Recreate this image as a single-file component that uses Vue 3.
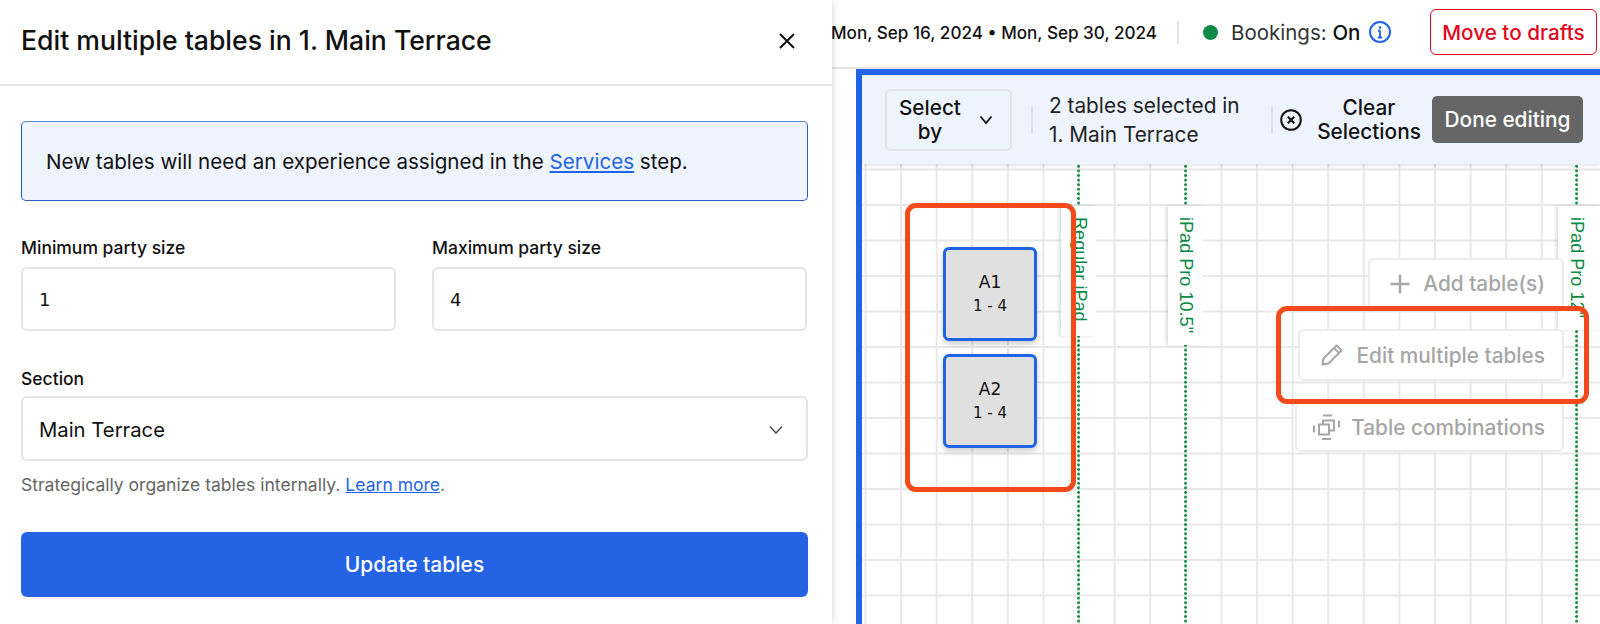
<script setup>
const tables = [
  { id: 'A1', range: '1 - 4', top: 83 },
  { id: 'A2', range: '1 - 4', top: 190 },
]
const guides = [
  { name: 'Regular iPad', left: 215, boxLeft: 199, boxWidth: 35, boxHeight: 130, textLeft: 208 },
  { name: 'iPad Pro 10.5"', left: 322, boxLeft: 306, boxWidth: 35, boxHeight: 139, textLeft: 314 },
  { name: 'iPad Pro 12"', left: 713, boxLeft: 696, boxWidth: 42, boxHeight: 124, textLeft: 705 },
]
</script>

<template>
  <div class="app">
    <aside class="panel">
      <header class="panel-head">
        <h1>Edit multiple tables in 1. Main Terrace</h1>
        <svg class="close" width="20" height="20" viewBox="0 0 20 20"><path d="M3 3l14 14M17 3L3 17" stroke="#111" stroke-width="2" fill="none"/></svg>
      </header>
      <div class="panel-body">
        <div class="notice">New tables will need an experience assigned in the <a>Services</a> step.</div>
        <div class="two">
          <label class="field">
            <span class="lbl">Minimum party size</span>
            <span class="box num">1</span>
          </label>
          <label class="field">
            <span class="lbl">Maximum party size</span>
            <span class="box num">4</span>
          </label>
        </div>
        <label class="field section">
          <span class="lbl">Section</span>
          <span class="box select">Main Terrace
            <svg width="16" height="10" viewBox="0 0 16 10"><path d="M2 1.5l6 6.5 6-6.5" stroke="#555" stroke-width="1.6" fill="none"/></svg>
          </span>
        </label>
        <p class="help">Strategically organize tables internally. <a>Learn more</a>.</p>
        <button class="update">Update tables</button>
      </div>
    </aside>

    <main class="main">
      <div class="topbar">
        <span class="dates">Mon, Sep 16, 2024 • Mon, Sep 30, 2024</span>
        <span class="vr"></span>
        <span class="dot"></span>
        <span class="bookings">Bookings: <b>On</b></span>
        <svg class="info" width="24" height="24" viewBox="0 0 24 24"><circle cx="12" cy="12" r="10" fill="none" stroke="#1f63e6" stroke-width="2"/><circle cx="12" cy="7.5" r="1.3" fill="#1f63e6"/><path d="M12 10.5v7M9.8 17.5h4.4M10 10.5h2" stroke="#1f63e6" stroke-width="1.8" fill="none"/></svg>
        <button class="drafts">Move to drafts</button>
      </div>

      <section class="frame">
        <div class="toolbar">
          <button class="selectby"><span>Select<br>by</span>
            <svg width="14" height="10" viewBox="0 0 14 10"><path d="M1.5 1.5L7 8l5.5-6.5" stroke="#111" stroke-width="1.8" fill="none"/></svg>
          </button>
          <span class="tvr"></span>
          <div class="count">2 tables selected in<br>1. Main Terrace</div>
          <span class="tvr"></span>
          <svg class="xc" width="24" height="24" viewBox="0 0 24 24"><circle cx="12" cy="12" r="9.8" fill="none" stroke="#111" stroke-width="2"/><path d="M8.8 8.8l6.4 6.4M15.2 8.8l-6.4 6.4" stroke="#111" stroke-width="2"/></svg>
          <div class="clear">Clear<br>Selections</div>
          <button class="done">Done editing</button>
        </div>

        <div class="canvas">
          <template v-for="g in guides" :key="g.name">
            <span class="guide" :style="{ left: g.left + 'px' }"></span>
            <span class="guide-box" :style="{ left: g.boxLeft + 'px', width: g.boxWidth + 'px', height: g.boxHeight + 'px' }"></span>
            <span class="guide-text" :style="{ left: g.textLeft + 'px' }">{{ g.name }}</span>
          </template>

          <div v-for="t in tables" :key="t.id" class="table" :style="{ top: t.top + 'px' }">
            <b>{{ t.id }}</b>
            <span>{{ t.range }}</span>
          </div>

          <div class="actions">
            <button class="act add">
              <svg width="22" height="22" viewBox="0 0 22 22"><path d="M11 1.5v19M1.5 11h19" stroke="#a6a6a6" stroke-width="2.4" fill="none"/></svg>
              Add table(s)
            </button>
            <button class="act edit">
              <svg width="26" height="26" viewBox="0 0 26 26"><path d="M3.5 22.5l1-6L17.5 3.5l5 5-13 13zM15 6l5 5" stroke="#a6a6a6" stroke-width="2" fill="none" stroke-linejoin="round"/></svg>
              Edit multiple tables
            </button>
            <button class="act combo">
              <svg width="28" height="28" viewBox="0 0 28 28"><path d="M11 7.5h11v10H11z" fill="none" stroke="#a6a6a6" stroke-width="2"/><path d="M7 11.5h10v10H7z" fill="#fff" stroke="#a6a6a6" stroke-width="2"/><path d="M11 2.5h9M10 26h9M2 12.5v7M27 7.5v7" stroke="#a6a6a6" stroke-width="2" fill="none"/></svg>
              Table combinations
            </button>
          </div>

          <div class="mark mark-tables"></div>
          <div class="mark mark-edit"></div>
        </div>
      </section>
    </main>
  </div>
</template>

<style>
html, body { margin: 0; background: #fff; overflow: hidden; }
</style>

<style scoped>
.app { display: flex; width: 1600px; height: 624px; overflow: hidden; font-family: Inter, "Noto Sans", sans-serif; color: #111; background: #fff; }
.panel { position: relative; z-index: 5; flex: 0 0 832px; background: #fff; box-shadow: 0 0 8px rgba(0,0,0,.18); }
.panel-head { height: 84px; box-sizing: content-box; display: flex; align-items: center; justify-content: space-between; padding: 0 35px 0 21px; border-bottom: 2px solid #e6e6e6; }
h1 { margin: -5px 0 0; font-size: 26.6px; font-weight: 500; }
.close { margin-top: -3px; }
.panel-body { padding: 35px 24px 0 21px; }
.notice { height: 80px; box-sizing: border-box; display: flex; align-items: center; white-space: pre-wrap; padding-left: 24px; background: #eef4fe; border: 1px solid #2a5bc4; border-top-color: #5d7fd0; border-radius: 5px; font-size: 20.6px; }
a { color: #1f63e6; text-decoration: underline; }
.two { display: grid; grid-template-columns: 375px 375px; gap: 36px; margin-top: 35px; }
.field { display: block; }
.lbl { display: block; height: 22px; line-height: 24px; margin-bottom: 9px; font-size: 17.5px; font-weight: 500; }
.box { display: flex; align-items: center; box-sizing: border-box; height: 64px; padding-left: 16px; background: #fff; border: 2px solid #e4e4e4; border-radius: 6px; font-size: 20.3px; }
.num { font-family: "DejaVu Sans", sans-serif; font-size: 18px; }
.section { margin-top: 36px; }
.section .lbl { margin-bottom: 7px; }
.select { height: 65px; justify-content: space-between; padding-right: 22px; padding-top: 2px; }
.help { margin: 13px 0 0; font-size: 17.55px; line-height: 22px; color: #666; }
.update { display: block; width: 100%; height: 65px; margin-top: 36px; border: 0; border-radius: 6px; background: #2563e5; color: #fff; font: 500 21px Inter, sans-serif; }

.main { flex: 1; min-width: 0; display: flex; flex-direction: column; }
.topbar { flex: 0 0 69px; box-sizing: border-box; display: flex; align-items: center; border-bottom: 2px solid #e4e4e4; padding-bottom: 3px; white-space: nowrap; }
.dates { font-weight: 500; font-size: 17.1px; width: 323px; margin-left: -1px; }
.vr { width: 2px; height: 23px; margin-left: 23px; background: #e4e4e4; }
.dot { width: 15px; height: 15px; border-radius: 50%; margin-left: 24px; background: #0e8a48; }
.bookings { margin-left: 13px; font-size: 20.5px; color: #333; width: 130px; }
.bookings b { font-weight: 500; color: #111; }
.info { margin-left: 7px; }
.drafts { margin-left: 38px; width: 167px; height: 46px; flex: none; background: #fff; color: #e2071c; border: 1px solid #e2071c; border-radius: 6px; font: 500 20.7px Inter, sans-serif; }

.frame { flex: 1; min-height: 0; display: flex; flex-direction: column; margin-left: 24px; border-left: 6px solid #1f63e6; border-top: 6px solid #1f63e6; }
.toolbar { position: relative; z-index: 3; flex: 0 0 89px; display: flex; align-items: center; background: #eef4fe; box-shadow: 0 2px 4px rgba(0,0,0,.1); font-size: 20.8px; font-weight: 500; }
.selectby { display: flex; align-items: center; box-sizing: border-box; width: 127px; height: 62px; margin-left: 23px; padding: 0 17px 0 12px; justify-content: space-between; background: #eef4fe; border: 2px solid #e1e4ea; border-radius: 6px; color: #111; font: 500 20.7px/24px Inter, sans-serif; text-align: center; }
.tvr { width: 2px; height: 27px; background: #dde1e8; }
.selectby + .tvr { margin-left: 19px; }
.count { width: 222px; margin-left: 16px; font-weight: 400; line-height: 29px; color: #222; }
.xc { margin-left: 6px; }
.clear { width: 118px; margin-left: 7px; text-align: center; line-height: 24px; }
.done { width: 151px; height: 47px; margin-left: 4px; flex: none; background: #666; border: 0; border-radius: 5px; color: #fff; font: 500 20.8px Inter, sans-serif; }

.canvas { position: relative; flex: 1; min-height: 0; overflow: hidden; background-color: #fff; background-image: linear-gradient(to right, #e8e8e8 2px, transparent 2px), linear-gradient(to bottom, #e8e8e8 2px, transparent 2px); background-size: 35.6px 35.5px; background-position: 2.5px 4.5px; }
.guide { position: absolute; top: 0; bottom: 0; width: 3px; background: radial-gradient(circle, #0a8a42 1.2px, transparent 1.5px) 0 0 / 3px 4.6px repeat-y; }
.guide-box { position: absolute; top: 42px; background: #fff; box-shadow: -2px 0 3px rgba(0,0,0,.14); }
.guide-text { position: absolute; top: 53px; z-index: 2; writing-mode: vertical-rl; font: 18.1px "Liberation Sans", sans-serif; color: #0a8a42; line-height: 20px; white-space: nowrap; }

.table { position: absolute; left: 81px; box-sizing: border-box; width: 94px; height: 94px; display: flex; flex-direction: column; align-items: center; padding-top: 20px; background: #e0e0e0; border: 3px solid #1f63e6; border-radius: 6px; box-shadow: 0 3px 6px rgba(0,0,0,.2); font-family: "DejaVu Sans", sans-serif; font-size: 15px; line-height: 24px; }
.table b { font-weight: 400; font-size: 17px; }

.actions { position: absolute; top: 94px; left: 433px; width: 269px; display: flex; flex-direction: column; align-items: flex-end; }
.act { display: flex; align-items: center; box-sizing: border-box; background: #fff; border: 2px solid #ececec; border-radius: 6px; color: #a6a6a6; font: 500 20.8px Inter, sans-serif; white-space: nowrap; padding: 0 17px 0 0; justify-content: flex-end; }
.add { width: 196px; height: 51px; gap: 12px; }
.edit { width: 266px; height: 52px; margin-top: 20px; gap: 12px; }
.combo { width: 269px; height: 50px; margin-top: 21px; gap: 11px; }

.mark { position: absolute; z-index: 4; box-sizing: border-box; border: 5px solid #f4491b; border-radius: 11px; pointer-events: none; }
.mark-tables { left: 43px; top: 39px; width: 171px; height: 289px; }
.mark-edit { left: 414px; top: 142px; width: 313px; height: 98px; }
</style>
